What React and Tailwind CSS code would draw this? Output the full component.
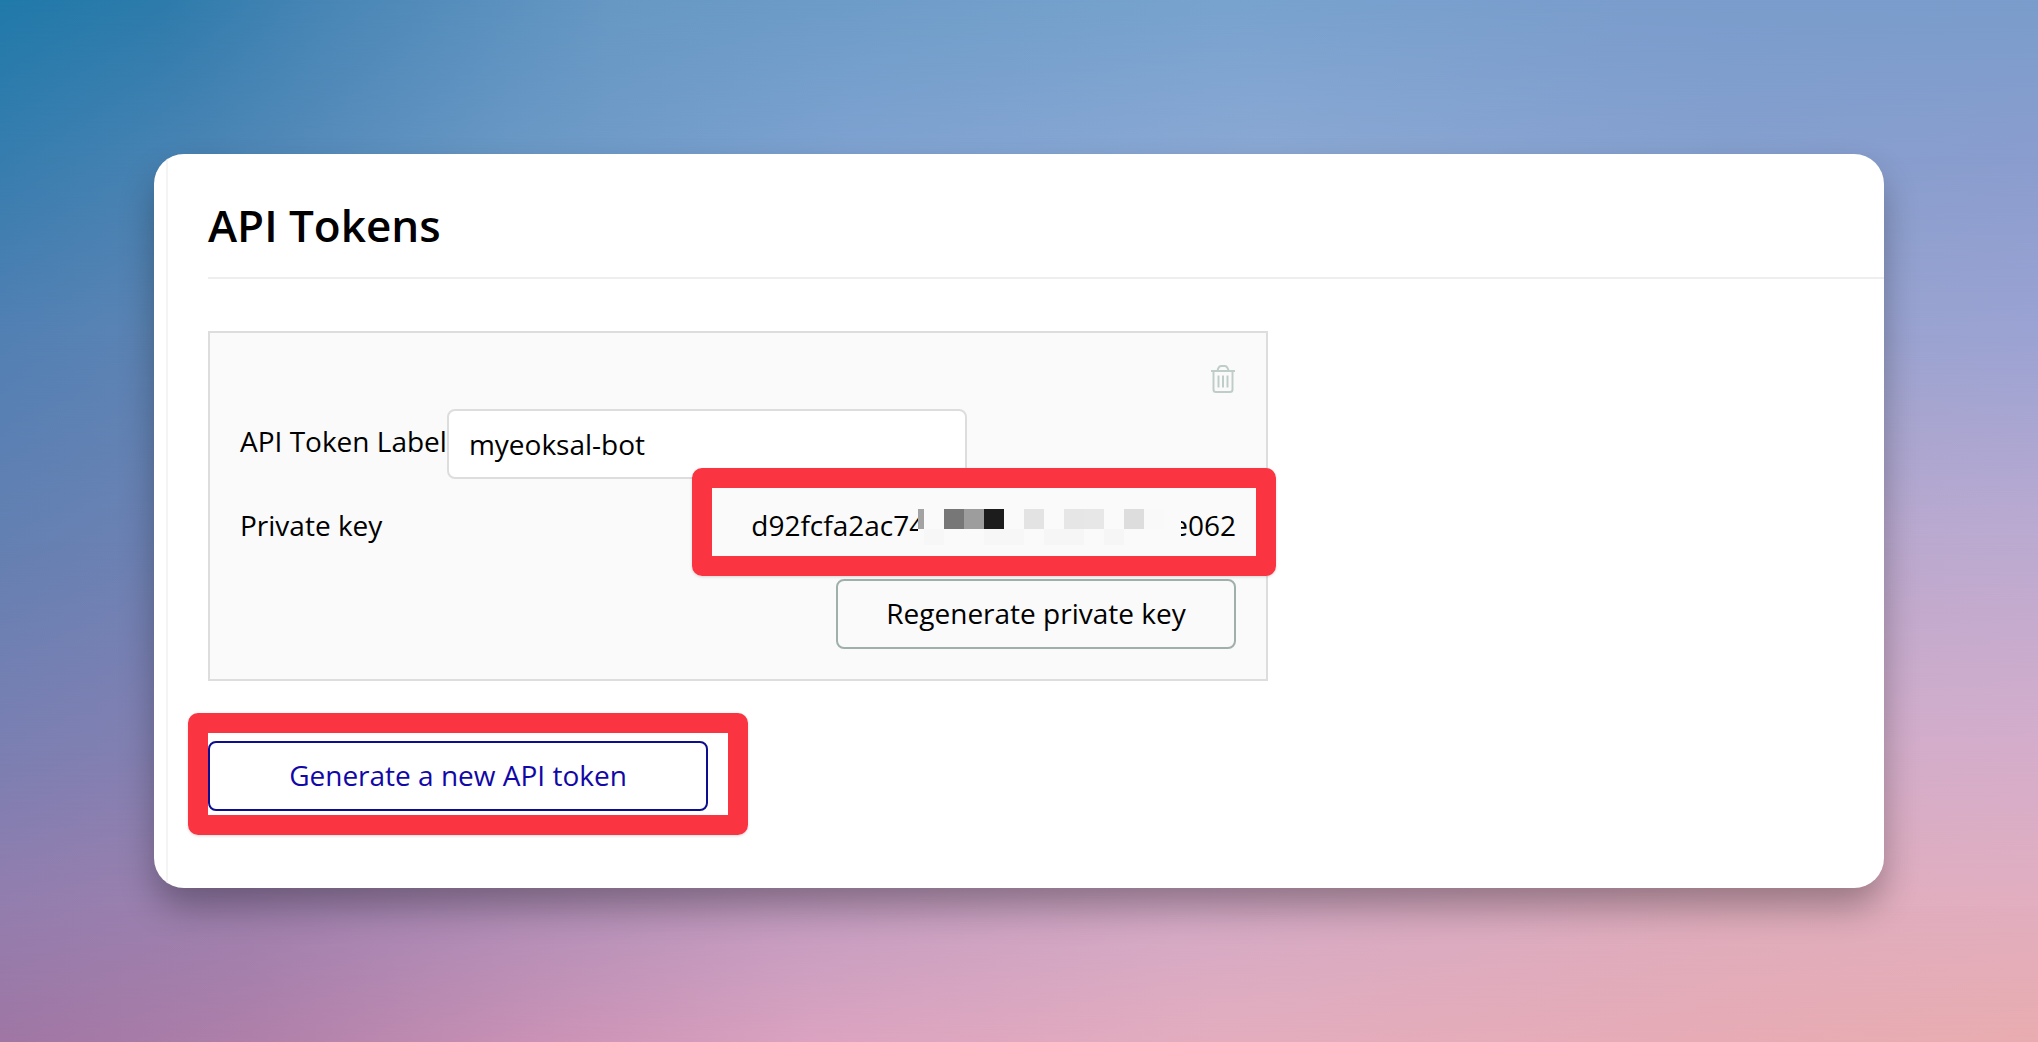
import { useState } from "react";

const mosaicTop = [
  "bg-[#777777]",
  "bg-[#9d9d9d]",
  "bg-[#1c1c1c]",
  "bg-[#fafafa]",
  "bg-[#e3e3e3]",
  "bg-[#fafafa]",
  "bg-[#e6e6e6]",
  "bg-[#e7e7e7]",
  "bg-[#fafafa]",
  "bg-[#dddddd]",
  "bg-[#f9f9f9]",
];

const mosaicBottom = [
  "bg-[#f7f7f7]",
  "bg-[#fafafa]",
  "bg-[#fafafa]",
  "bg-[#f7f7f7]",
  "bg-[#f7f7f7]",
  "bg-[#fafafa]",
  "bg-[#f6f6f6]",
  "bg-[#f6f6f6]",
  "bg-[#fafafa]",
  "bg-[#f6f6f6]",
  "bg-[#fafafa]",
];

// Horizontal gradients stacked from top to bottom, each one fading in over the last
function Backdrop() {
  return (
    <div className="absolute inset-0 -z-10" aria-hidden="true">
      <div className="absolute inset-0 bg-[linear-gradient(90deg,#207aaa_0%,#2d7bab_8%,#4886b6_16%,#6798c4_30%,#78a3cf_60%,#7a9dcd_80%,#7a9dcc_100%)]" />
      <div className="absolute inset-0 bg-[linear-gradient(90deg,#367dae_0%,#4a84b4_10%,#6a98c5_25%,#7fa2d1_42%,#8ba8d3_62%,#859fce_85%,#8a9dce_100%)] mask-[linear-gradient(180deg,transparent_0%,black_15%)]" />
      <div className="absolute inset-0 bg-[linear-gradient(90deg,#5280b4_0%,#5c84b4_8%,#9aa3d0_92%,#9ba3d3_100%)] mask-[linear-gradient(180deg,transparent_15%,black_32%)]" />
      <div className="absolute inset-0 bg-[linear-gradient(90deg,#6480b2_0%,#6d82b4_8%,#bba9cf_92%,#bcaad0_100%)] mask-[linear-gradient(180deg,transparent_32%,black_52%)]" />
      <div className="absolute inset-0 bg-[linear-gradient(90deg,#7b7fb2_0%,#8480b2_8%,#d3adca_92%,#d5adcb_100%)] mask-[linear-gradient(180deg,transparent_52%,black_72%)]" />
      <div className="absolute inset-0 bg-[linear-gradient(90deg,#937eae_0%,#9e80ae_12%,#c19bc0_38%,#d3a9c6_58%,#dfadbd_85%,#e2aebf_100%)] mask-[linear-gradient(180deg,transparent_72%,black_87%)]" />
      <div className="absolute inset-0 bg-[linear-gradient(90deg,#9f76a4_0%,#ae7fa9_12%,#c991b5_26%,#dba3c0_40%,#e3adbe_60%,#e6abb6_82%,#e8acaf_100%)] mask-[linear-gradient(180deg,transparent_87%,black_100%)]" />
    </div>
  );
}

function TrashIcon() {
  return (
    <svg width="26" height="28" viewBox="0 0 26 28" fill="none" stroke="#bfcdc8" strokeWidth="2" aria-hidden="true">
      <path d="M1 6h24" />
      <path d="M7.500 6C8 3 9.500 1 11.500 1h3C16.500 1 18 3 18.500 6" />
      <path d="M3.500 6v18.500q0 2.500 2.500 2.500h14q2.500 0 2.500-2.500V6" />
      <path d="M8.500 10.500v12M13 10.500v12M17.500 10.500v12" />
    </svg>
  );
}

function Mosaic() {
  return (
    <div className="relative mt-1 -ml-[7px] flex w-[263px] bg-[#fafafa]" aria-hidden="true">
      <div className="h-5 w-[6px] bg-[#a3a3a3]" />
      <div className="ml-5 h-9 w-[220px]">
        <div className="flex">
          {mosaicTop.map((color, i) => (
            <div key={i} className={`size-5 ${color}`} />
          ))}
        </div>
        <div className="-ml-5 flex">
          {mosaicBottom.map((color, i) => (
            <div key={i} className={`h-4 w-5 ${color}`} />
          ))}
        </div>
      </div>
    </div>
  );
}

function Highlight({ className }) {
  return (
    <div
      className={`pointer-events-none absolute rounded-[10px] border-20 border-[#fb3441] shadow-[0_1px_3px_rgba(0,0,0,0.15)] ${className}`}
      aria-hidden="true"
    />
  );
}

function TokenCard() {
  const [label, setLabel] = useState("myeoksal-bot");

  return (
    <section className="w-[1060px] max-w-full border-2 border-[#dddddd] bg-[#fafafa] p-[30px] pt-8">
      <div className="flex justify-end">
        <button type="button" aria-label="Delete token">
          <TrashIcon />
        </button>
      </div>
      <div className="mt-4 flex">
        <label htmlFor="token-label" className="pt-3 leading-10">
          API Token Label
        </label>
        <input
          id="token-label"
          type="text"
          value={label}
          onChange={(e) => setLabel(e.target.value)}
          className="h-[70px] w-[520px] rounded-lg border-2 border-[#dddddd] bg-white px-5 outline-none"
        />
      </div>
      <div className="mt-[26px] flex h-10 items-center justify-between leading-10">
        <span>Private key</span>
        <div className="relative flex">
          <span>d92fcfa2ac74</span>
          <Mosaic />
          <span className="-ml-[9px]">e062</span>
          <Highlight className="-top-[37px] -right-10 -bottom-[31px] -left-[59px]" />
        </div>
      </div>
      <div className="mt-[34px] flex justify-end">
        <button type="button" className="h-[70px] w-[400px] rounded-lg border-2 border-[#9fb0ac] pb-0.5">
          Regenerate private key
        </button>
      </div>
    </section>
  );
}

export default function App() {
  return (
    <div className="relative isolate min-h-screen p-[154px] font-['Open_Sans',sans-serif] text-[28px] text-black">
      <Backdrop />
      <main className="overflow-hidden rounded-[30px] bg-white pl-3 shadow-[0_20px_36px_-2px_rgba(0,0,0,0.32)]">
        <div className="border-l-2 border-[#f4f4f4] pb-[77px] pl-10">
          <h1 className="border-b-2 border-[#eeeeee] pt-[43px] pb-6 text-[44px] leading-14 font-semibold">API Tokens</h1>
          <div className="mt-[52px]">
            <TokenCard />
          </div>
          <div className="relative mt-15 w-[500px]">
            <button
              type="button"
              className="h-[70px] w-full rounded-lg border-2 border-[#0d0d8f] pb-0.5 text-[#1208a8]"
            >
              Generate a new API token
            </button>
            <Highlight className="-top-7 -right-10 -bottom-6 -left-5" />
          </div>
        </div>
      </main>
    </div>
  );
}
